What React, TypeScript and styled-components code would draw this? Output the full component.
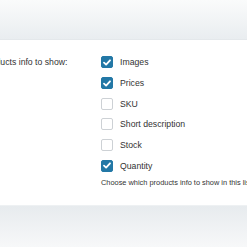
import React from "react";
import styled, { createGlobalStyle } from "styled-components";

const GlobalStyle = createGlobalStyle`
  html, body {
    margin: 0;
    padding: 0;
    background: #f4f6f7;
    font-family: "Liberation Sans", Arial, sans-serif;
    overflow: hidden;
  }
`;

const Page = styled.div`
  width: 247px;
  height: 247px;
  display: flex;
  flex-direction: column;
`;

const TopBand = styled.div`
  height: 40px;
  background: linear-gradient(#fafbfb, #e9edf0);
  border-bottom: 1px solid #e4e8eb;
  box-sizing: border-box;
`;

const Panel = styled.div`
  height: 165px;
  background: #fff;
  box-sizing: border-box;
  padding-top: 12px;
  display: grid;
  grid-template-columns: 101px 1fr;
  align-content: start;
`;

const BottomBand = styled.div`
  flex: 1;
  background: linear-gradient(#e7ebee, #f7f8f9);
  border-top: 1px solid #eef1f3;
`;

const FieldLabel = styled.div`
  margin-left: -18px;
  white-space: nowrap;
  font-size: 8.7px;
  line-height: 21px;
  color: #333;
`;

const Options = styled.div`
  display: flex;
  flex-direction: column;
  min-width: 0;
`;

const Row = styled.label`
  display: flex;
  align-items: center;
  gap: 7px;
  height: 20.7px;
  font-size: 8.7px;
  color: #333;
  white-space: nowrap;
`;

const Box = styled.span<{ $checked: boolean }>`
  width: 12px;
  height: 12px;
  box-sizing: border-box;
  border-radius: 2px;
  border: 1px solid ${(p) => (p.$checked ? "#2378a6" : "#cdd1d5")};
  background: ${(p) => (p.$checked ? "#2378a6" : "#fff")};
  display: flex;
  align-items: center;
  justify-content: center;
  flex-shrink: 0;
`;

const Help = styled.div`
  margin-top: 2px;
  font-size: 7.4px;
  line-height: 10px;
  color: #333;
  white-space: nowrap;
`;

const options = [
  { name: "Images", checked: true },
  { name: "Prices", checked: true },
  { name: "SKU", checked: false },
  { name: "Short description", checked: false },
  { name: "Stock", checked: false },
  { name: "Quantity", checked: true },
];

const Check = () => (
  <svg width="8" height="7" viewBox="0 0 8 7">
    <path d="M1 3.6 L3.1 5.6 L7 1.3" fill="none" stroke="#fff" strokeWidth="1.8" strokeLinecap="round" strokeLinejoin="round" />
  </svg>
);

const App = () => {
  return (
    <Page>
      <GlobalStyle />
      <TopBand />
      <Panel>
        <FieldLabel>Products info to show:</FieldLabel>
        <Options>
          {options.map((o) => (
            <Row key={o.name}>
              <Box $checked={o.checked}>{o.checked && <Check />}</Box>
              {o.name}
            </Row>
          ))}
          <Help>Choose which products info to show in this list</Help>
        </Options>
      </Panel>
      <BottomBand />
    </Page>
  );
};

export default App;
